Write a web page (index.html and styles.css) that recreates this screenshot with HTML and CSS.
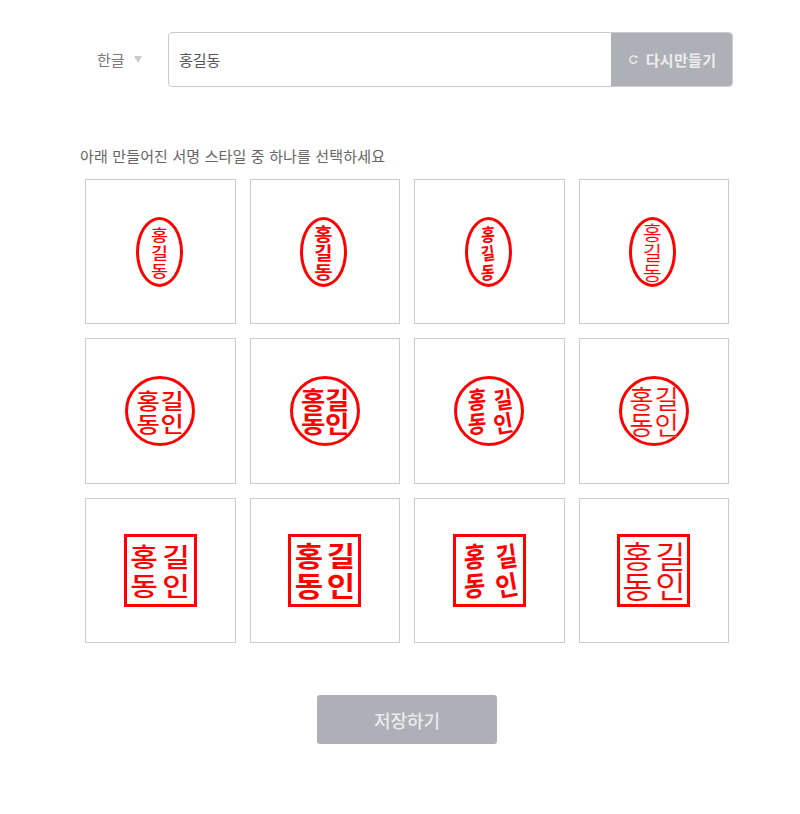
FILE: index.html
```html
<!DOCTYPE html>
<html lang="ko">
<head>
<meta charset="utf-8">
<title>서명 만들기</title>
<link rel="stylesheet" href="styles.css">
</head>
<body>
<main class="page">
  <section class="controls">
    <div class="lang"><span>한글</span><i class="caret"></i></div>
    <div class="field">
      <div class="field-value">홍길동</div>
      <button class="remake" type="button">
        <svg class="remake-icon" viewBox="0 0 12 12" width="11" height="11"><path d="M9.4 3.9A4 4 0 1 0 9.8 7.4" fill="none" stroke="currentColor" stroke-width="1.5"/><path d="M7.6 4.4h3v-3z" fill="currentColor"/></svg>
        <span>다시만들기</span>
      </button>
    </div>
  </section>

  <p class="hint">아래 만들어진 서명 스타일 중 하나를 선택하세요</p>

  <section class="grid">
    <div class="card"><div class="stamp oval plain"><b>홍</b><b>길</b><b>동</b></div></div>
    <div class="card"><div class="stamp oval heavy"><b>홍</b><b>길</b><b>동</b></div></div>
    <div class="card"><div class="stamp oval hand"><b>홍</b><b>길</b><b>동</b></div></div>
    <div class="card"><div class="stamp oval seal"><b>홍</b><b>길</b><b>동</b></div></div>

    <div class="card"><div class="stamp circle plain"><b>홍</b><b>길</b><b>동</b><b>인</b></div></div>
    <div class="card"><div class="stamp circle heavy"><b>홍</b><b>길</b><b>동</b><b>인</b></div></div>
    <div class="card"><div class="stamp circle hand"><b>홍</b><b>길</b><b>동</b><b>인</b></div></div>
    <div class="card"><div class="stamp circle seal"><b>홍</b><b>길</b><b>동</b><b>인</b></div></div>

    <div class="card"><div class="stamp square plain"><b>홍</b><b>길</b><b>동</b><b>인</b></div></div>
    <div class="card"><div class="stamp square heavy"><b>홍</b><b>길</b><b>동</b><b>인</b></div></div>
    <div class="card"><div class="stamp square hand"><b>홍</b><b>길</b><b>동</b><b>인</b></div></div>
    <div class="card"><div class="stamp square seal"><b>홍</b><b>길</b><b>동</b><b>인</b></div></div>
  </section>

  <div class="actions"><button class="save" type="button">저장하기</button></div>
</main>
</body>
</html>
```
FILE: styles.css
```css
* { box-sizing: border-box; }
html, body { margin: 0; padding: 0; background: #fff; }
body { font-family: "Noto Sans CJK KR", "Noto Sans", sans-serif; color: #666; overflow: hidden; }
.page { width: 800px; height: 814px; padding: 32px 67px 0 80px; }

.controls { display: flex; align-items: stretch; height: 55px; }
.lang { width: 88px; padding-left: 17px; display: flex; align-items: center; gap: 9px; font-size: 15px; color: #777; }
.caret { width: 0; height: 0; border-left: 4.5px solid transparent; border-right: 4.5px solid transparent; border-top: 7px solid #ccc; }
.field { flex: 1; display: flex; border: 1px solid #ccc; border-radius: 4px; overflow: hidden; }
.field-value { flex: 1; display: flex; align-items: center; padding-left: 10px; font-size: 15px; color: #555; }
.remake { width: 122px; margin: -1px; border: 0; background: #adb0b7; color: #eceded; display: flex; align-items: center; justify-content: center; gap: 7px; font: 700 15px "Noto Sans CJK KR", sans-serif; letter-spacing: 0.3px; padding: 0; }
.remake-icon { display: block; }

.hint { margin: 59px 0 0; height: 20px; line-height: 20px; font-size: 15px; letter-spacing: 0.15px; color: #666; }

.grid { margin: 12.5px 4px 0 5px; display: grid; grid-template-columns: repeat(4, 1fr); grid-auto-rows: 145.5px; gap: 14px; }
.card { border: 1px solid #ccc; display: flex; align-items: center; justify-content: center; background: #fff; }

.stamp { display: grid; justify-items: center; align-items: center; align-content: center; justify-content: center; border: 3px solid #f00; color: #f00; background: #fff; }
.stamp b { display: block; font-weight: 500; }
.oval { width: 47px; height: 70px; margin: 2px 2px 0 0; border-radius: 50%; grid-template-columns: 22px; font-size: 16px; line-height: 18px; }
.circle { width: 70px; height: 70px; border-radius: 50%; grid-template-columns: 24px 24px; font-size: 22px; line-height: 23px; }
.square { width: 73px; height: 73px; border-width: 3.5px; grid-template-columns: 32px 32px; font-size: 26px; line-height: 29px; }
.plain b { transform: scaleX(1.15); }

.heavy b { font-weight: 700; transform: scaleX(1.1); }
.oval.heavy { font-size: 18px; line-height: 19px; }
.circle.heavy { font-size: 24px; line-height: 24px; }
.square.heavy { font-size: 28px; line-height: 30px; }

.hand b { font-weight: 700; }
.oval.hand { font-size: 15px; line-height: 19px; }
.circle.hand { grid-template-columns: 28px 24px; font-size: 20px; line-height: 24px; }
.square.hand { grid-template-columns: 34px 30px; font-size: 23px; line-height: 29px; }
.hand b:nth-child(1) { transform: rotate(-5deg) skewX(-6deg) scaleY(1.2); }
.hand b:nth-child(2) { transform: rotate(-8deg) scaleY(1.15); }
.hand b:nth-child(3) { transform: rotate(-5deg) skewX(-8deg) scaleY(1.2); }
.hand b:nth-child(4) { transform: rotate(-10deg) scale(1.05, 1.15); }

.seal b { font-weight: 400; -webkit-text-stroke: 0.15px #fff; }
.oval.seal { font-size: 16px; line-height: 20px; }
.oval.seal b { transform: scale(1.3, 1.25); }
.circle.seal { font-size: 21px; line-height: 26px; grid-template-columns: 25px 24px; }
.circle.seal b { transform: scale(1.25, 1.25); }
.square.seal { font-size: 27px; line-height: 30px; grid-template-columns: 33px 32px; }
.square.seal b { transform: scale(1.22, 1.15); }

.actions { margin-top: 52px; display: flex; padding-left: 237px; }
.save { width: 180px; height: 49px; border: 0; border-radius: 3px; background: #adb0b7; color: #e9eaec; font: 500 18px "Noto Sans CJK KR", sans-serif; padding: 0; }
```
